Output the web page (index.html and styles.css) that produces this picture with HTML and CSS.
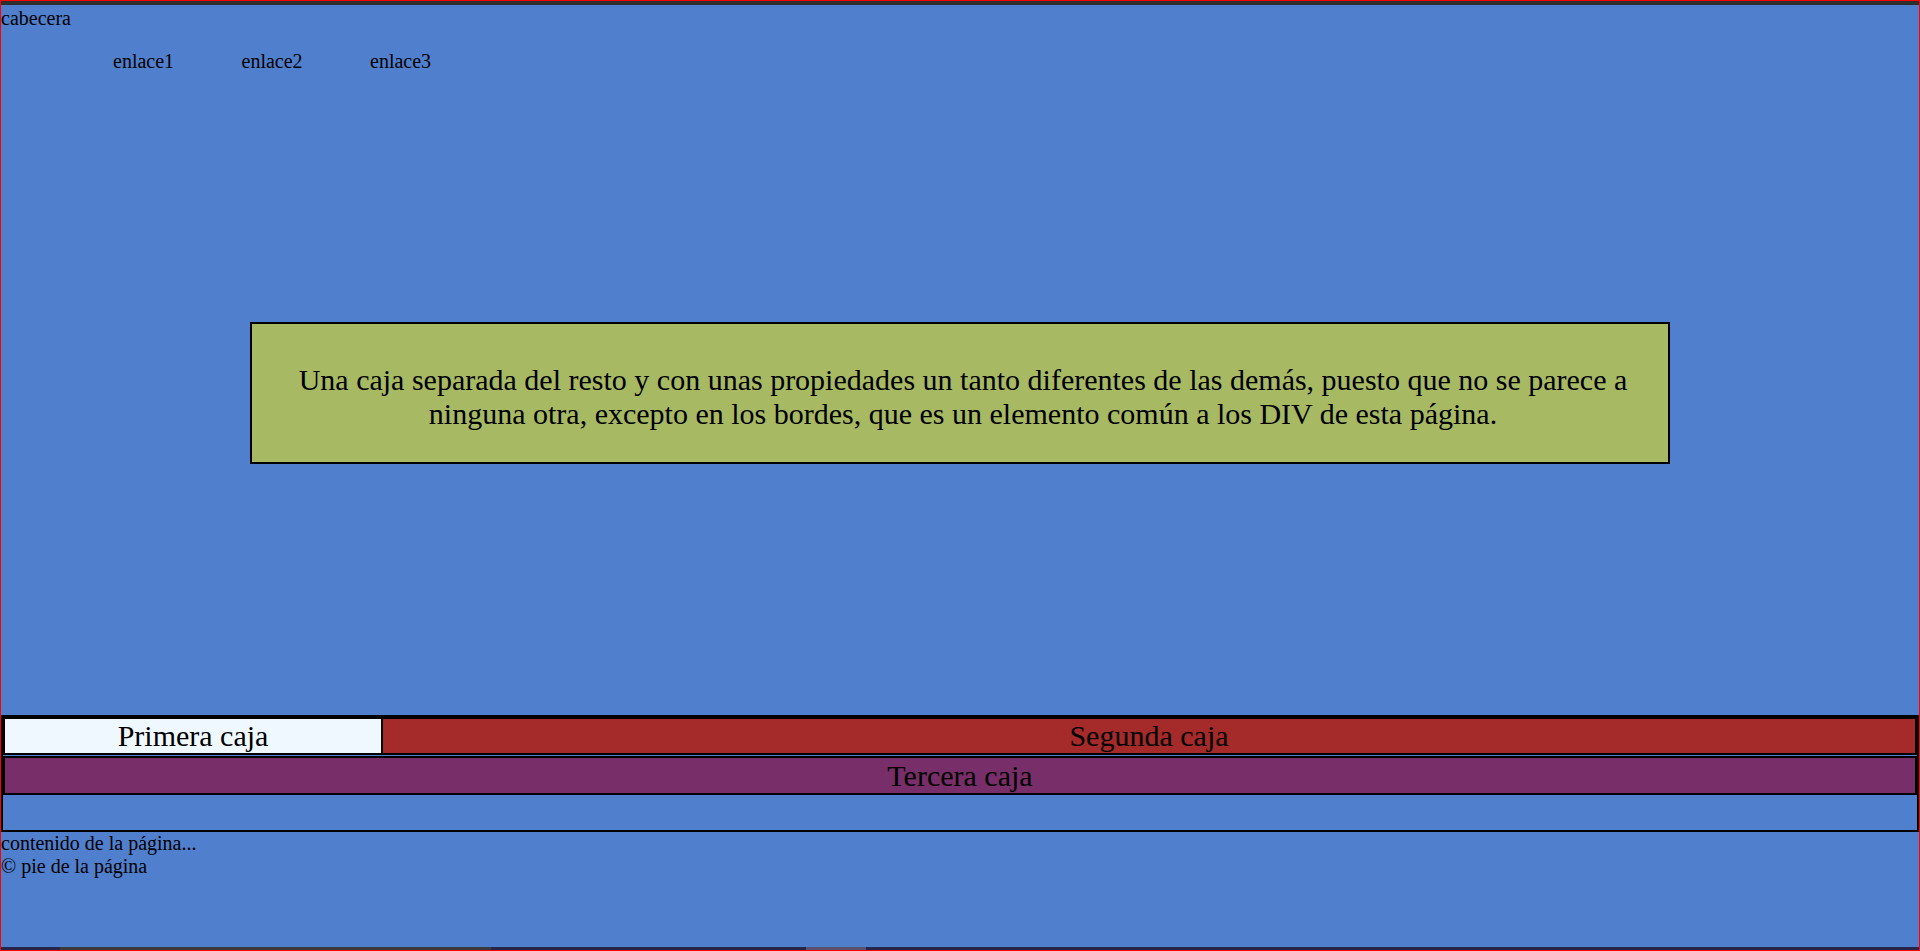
FILE: index.html
```html
<!DOCTYPE html>
<html lang="es">
<head>
<meta charset="utf-8">
<title>Cajas</title>
<link rel="stylesheet" href="styles.css">
</head>
<body>
<div class="window">
  <div class="chrome-top"></div>
  <div class="page">
    <header class="cabecera">
      <div class="titulo">cabecera</div>
      <ul class="menu">
        <li><a href="#">enlace1</a></li>
        <li><a href="#">enlace2</a></li>
        <li><a href="#">enlace3</a></li>
      </ul>
    </header>
    <div class="destacada">Una caja separada del resto y con unas propiedades un tanto diferentes de las demás, puesto que no se parece a ninguna otra, excepto en los bordes, que es un elemento común a los DIV de esta página.</div>
    <div class="cajas">
      <div class="fila">
        <div class="caja primera">Primera caja</div>
        <div class="caja segunda">Segunda caja</div>
      </div>
      <div class="caja tercera">Tercera caja</div>
      <div class="hueco"></div>
    </div>
    <div class="contenido">contenido de la página...</div>
    <footer class="pie">© pie de la página</footer>
  </div>
  <div class="chrome-bottom"></div>
</div>
</body>
</html>
```

FILE: styles.css
```css
html, body {
  margin: 0;
  padding: 0;
  background: #507fcd;
}

.window {
  box-sizing: border-box;
  height: 951px;
  border: 1px solid #ff0000;
  display: flex;
  flex-direction: column;
  font-family: "Liberation Serif", "Times New Roman", serif;
  font-size: 20px;
  color: #000;
  overflow: hidden;
}

.chrome-top {
  height: 4px;
  background: #2e2e2e;
  flex: none;
}

.chrome-bottom {
  height: 3px;
  flex: none;
  background: linear-gradient(to right,
    #26264a 0, #26264a 59px,
    #3a3a3a 59px, #3a3a3a 490px,
    #26264a 490px, #26264a 805px,
    #5a5070 805px, #5a5070 865px,
    #26264a 865px);
}

.page {
  flex: 1;
  min-height: 0;
  overflow: hidden;
  padding-top: 2px;
}

.titulo {
  line-height: 23px;
}

.menu {
  list-style: none;
  margin: 20px 0 0;
  padding: 0 0 0 112px;
  display: flex;
  line-height: 23px;
}

.menu li {
  width: 128.5px;
}

.menu a {
  color: #000;
  text-decoration: none;
}

.destacada {
  box-sizing: border-box;
  width: 1420px;
  margin: 249px auto 251px;
  border: 2px solid #000;
  background: #a8b964;
  padding: 39px 20px 31px 26px;
  font-size: 30px;
  line-height: 34px;
  text-align: center;
}

.cajas {
  border: 2px solid #000;
}

.fila {
  display: flex;
}

.caja {
  font-size: 30px;
  text-align: center;
  border: 2px solid #000;
}

.primera {
  box-sizing: border-box;
  width: 380px;
  flex: none;
  background: #f0f8ff;
  line-height: 34px;
}

.segunda {
  flex: 1;
  border-left: none;
  background: #a52a2a;
  line-height: 34px;
}

.tercera {
  margin-top: 1px;
  background: #782e68;
  line-height: 35px;
}

.hueco {
  height: 35px;
}

.contenido,
.pie {
  line-height: 23px;
}
```
